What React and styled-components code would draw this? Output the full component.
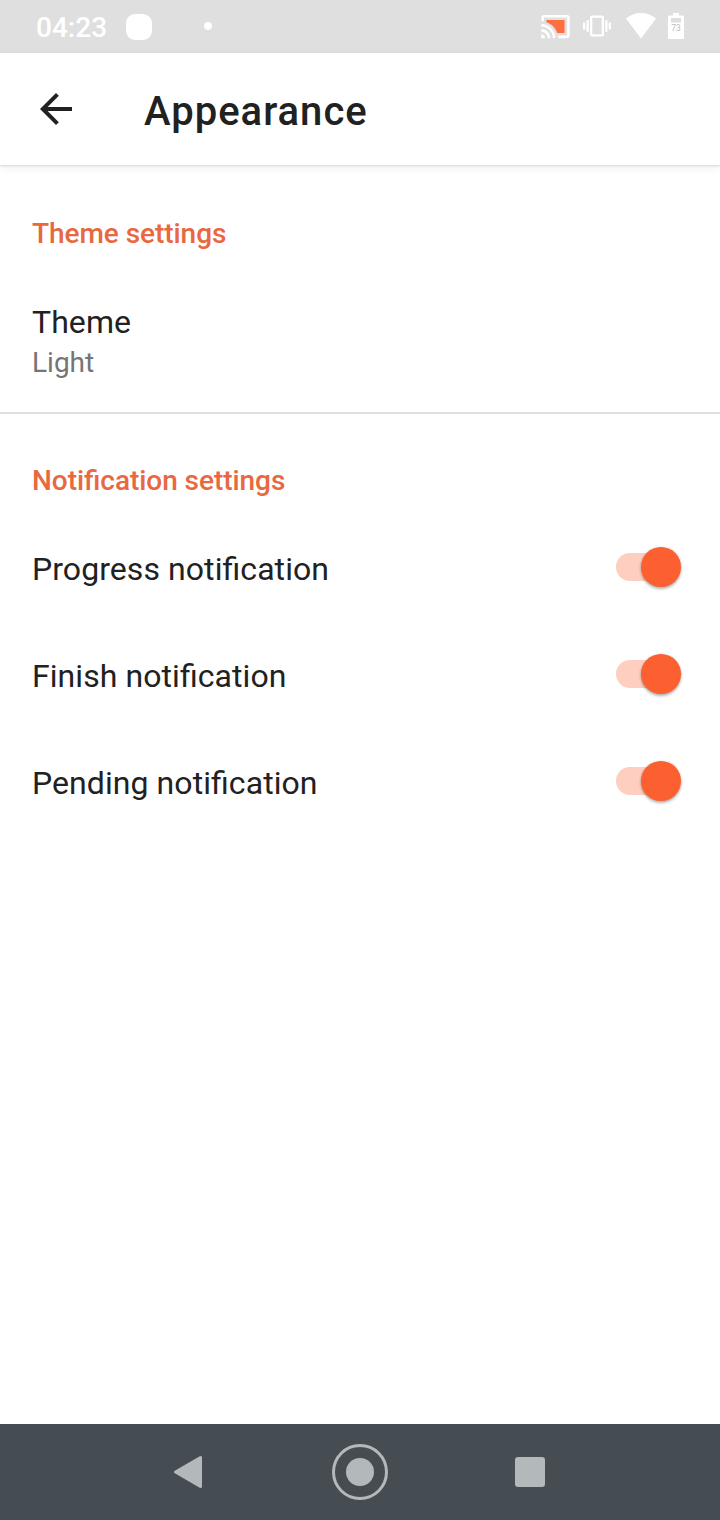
import React, { useState } from 'react'
import styled, { createGlobalStyle } from 'styled-components'

const GlobalStyle = createGlobalStyle`
* {
    box-sizing: border-box;
}

body {
    margin: 0;
    background-color: #ffffff;
    font-family: Roboto, "Liberation Sans", sans-serif;
}
`

const notifications = ['Progress notification', 'Finish notification', 'Pending notification']

const StatusIcons = () => (
    <StatusRight>
        <svg width="31" height="31" viewBox="0 0 24 24" fill="#fff">
            <path fill="#ff6e40" d="M19 7H5v1.63c3.96 1.28 7.09 4.41 8.37 8.37H19V7z" />
            <path d="M1 18v3h3c0-1.66-1.34-3-3-3zm0-4v2c2.76 0 5 2.24 5 5h2c0-3.87-3.13-7-7-7zm0-4v2c4.97 0 9 4.03 9 9h2c0-6.08-4.93-11-11-11zm20-7H3c-1.1 0-2 .9-2 2v3h2V5h18v14h-7v2h7c1.1 0 2-.9 2-2V5c0-1.1-.9-2-2-2z" />
        </svg>
        <svg width="28" height="28" viewBox="0 0 24 24" fill="#fff">
            <path d="M0 15h2V9H0v6zm3 2h2V7H3v10zm19-8v6h2V9h-2zm-3 8h2V7h-2v10zM16.5 3h-9C6.67 3 6 3.67 6 4.5v15c0 .83.67 1.5 1.5 1.5h9c.83 0 1.5-.67 1.5-1.5v-15c0-.83-.67-1.5-1.5-1.5zM16 19H8V5h8v14z" />
        </svg>
        <svg width="30" height="26" viewBox="0 0 30 26" fill="#fff">
            <path d="M0 5.5C4.2 2 9.3 0 15 0s10.8 2 15 5.5L15 25.5z" />
        </svg>
        <svg width="16" height="27" viewBox="0 0 16 27">
            <path fill="#fff" fillRule="evenodd" d="M5 0h6v2.5h3.500A1.5 1.5 0 0 1 16 4v20.5a1.5 1.5 0 0 1-1.5 1.5h-13A1.5 1.5 0 0 1 0 24.5V4a1.5 1.5 0 0 1 1.5-1.5H5zM3 5v4.5h10V5z" />
            <text x="8" y="17.500" textAnchor="middle" fontSize="8.500" fill="#bdbdbd">73</text>
        </svg>
    </StatusRight>
)

const Toggle = ({ checked, onClick, label }) => (
    <Track role="switch" aria-checked={checked} aria-label={label} $on={checked} onClick={onClick}>
        <Thumb $on={checked} />
    </Track>
)

const App = () => {
    const [enabled, setEnabled] = useState([true, true, true])

    const toggle = index => setEnabled(enabled.map((on, i) => (i === index ? !on : on)))

    return (
        <Screen>
            <GlobalStyle />
            <StatusBar>
                <Clock>04:23</Clock>
                <AppBadge />
                <Dot />
                <StatusIcons />
            </StatusBar>
            <Header>
                <BackButton aria-label="Back">
                    <svg width="48" height="48" viewBox="0 0 24 24" fill="#212121">
                        <path d="M20 11H7.830l5.590-5.590L12 4l-8 8 8 8 1.410-1.410L7.830 13H20v-2z" />
                    </svg>
                </BackButton>
                <Title>Appearance</Title>
            </Header>
            <Section $top={49} $divider>
                <SectionTitle>Theme settings</SectionTitle>
                <ThemeRow>
                    <Label>Theme</Label>
                    <Summary>Light</Summary>
                </ThemeRow>
            </Section>
            <Section $top={47}>
                <SectionTitle>Notification settings</SectionTitle>
                <SwitchList>
                    {notifications.map((name, index) => (
                        <SwitchRow key={name}>
                            <Label>{name}</Label>
                            <Toggle label={name} checked={enabled[index]} onClick={() => toggle(index)} />
                        </SwitchRow>
                    ))}
                </SwitchList>
            </Section>
            <NavBar>
                <NavButton aria-label="Back">
                    <svg width="34" height="34" viewBox="0 0 34 34">
                        <path d="M27.500 2.500v29L2.500 17z" fill="#b3b8ba" stroke="#b3b8ba" strokeWidth="3" strokeLinejoin="round" />
                    </svg>
                </NavButton>
                <NavButton aria-label="Home">
                    <svg width="56" height="56" viewBox="0 0 56 56">
                        <circle cx="28" cy="28" r="26.500" fill="none" stroke="#b3b8ba" strokeWidth="3" />
                        <circle cx="28" cy="28" r="14" fill="#b3b8ba" />
                    </svg>
                </NavButton>
                <NavButton aria-label="Recent apps">
                    <RecentSquare />
                </NavButton>
            </NavBar>
        </Screen>
    )
}

export default App

const Screen = styled.div`
display: flex;
flex-direction: column;
width: 720px;
height: 1520px;
background-color: #ffffff;
color: #212121;
`

const StatusBar = styled.div`
display: flex;
align-items: center;
flex: none;
height: 53px;
padding: 0 36px;
background-color: #dfdfdf;
color: white;
`

const Clock = styled.span`
width: 90px;
padding-top: 2px;
font-size: 28px;
font-weight: 500;
line-height: 32px;
`

const AppBadge = styled.div`
width: 26px;
height: 26px;
border-radius: 9px;
background-color: white;
`

const Dot = styled.div`
width: 8px;
height: 8px;
margin: 0 0 1px 52px;
border-radius: 50%;
background-color: white;
`

const StatusRight = styled.div`
display: flex;
align-items: center;
margin: 0 0 1px auto;

svg {
    display: block;
}

svg + svg {
    margin-left: 12px;
}

svg:nth-child(3) {
    margin-left: 15px;
}
`

const Header = styled.header`
display: flex;
align-items: center;
flex: none;
height: 112px;
padding-left: 32px;
background-color: white;
box-shadow: 0 1px 2px rgba(0, 0, 0, 0.12), 0 3px 8px rgba(0, 0, 0, 0.06);
`

const BackButton = styled.button`
display: flex;
width: 112px;
padding: 0;
border: none;
background: none;
`

const Title = styled.h1`
margin: 6px 0 0;
font-size: 40px;
font-weight: 500;
line-height: 48px;
letter-spacing: 1px;
`

const Section = styled.section`
flex: none;
padding: ${props => props.$top}px 32px 0;
border-bottom: ${props => (props.$divider ? '2px solid #dfdfdf' : 'none')};
`

const SectionTitle = styled.h2`
margin: 0;
font-size: 28px;
font-weight: 500;
line-height: 40px;
letter-spacing: -0.050px;
font-feature-settings: "liga" 1;
color: #e8683f;
`

const ThemeRow = styled.div`
display: flex;
flex-direction: column;
height: 158px;
padding-top: 47px;
`

const Label = styled.span`
font-size: 32px;
line-height: 42px;
letter-spacing: 0.070px;
font-feature-settings: "liga" 1;
`

const Summary = styled.span`
font-size: 28px;
line-height: 40px;
color: #757575;
`

const SwitchList = styled.div`
padding-top: 14px;
`

const SwitchRow = styled.div`
display: flex;
align-items: center;
justify-content: space-between;
height: 107px;
`

const Track = styled.button`
display: flex;
align-items: center;
justify-content: ${props => (props.$on ? 'flex-end' : 'flex-start')};
width: 64px;
height: 28px;
margin: -4px 8px 0 0;
padding: 0;
border: none;
border-radius: 14px;
background-color: ${props => (props.$on ? '#fecfc0' : '#bdbdbd')};
`

const Thumb = styled.span`
flex: none;
width: 40px;
height: 40px;
margin-right: -1px;
border-radius: 50%;
background-color: ${props => (props.$on ? '#fc5f30' : '#fafafa')};
box-shadow: 0 2px 3px rgba(0, 0, 0, 0.28), 0 0 3px rgba(0, 0, 0, 0.12);
`

const NavBar = styled.nav`
display: flex;
align-items: center;
justify-content: center;
flex: none;
height: 96px;
margin-top: auto;
background-color: #454d52;
`

const NavButton = styled.button`
display: flex;
align-items: center;
justify-content: center;
width: 170px;
height: 96px;
padding: 0;
border: none;
background: none;
`

const RecentSquare = styled.span`
width: 30px;
height: 30px;
border-radius: 3px;
background-color: #b3b8ba;
`
